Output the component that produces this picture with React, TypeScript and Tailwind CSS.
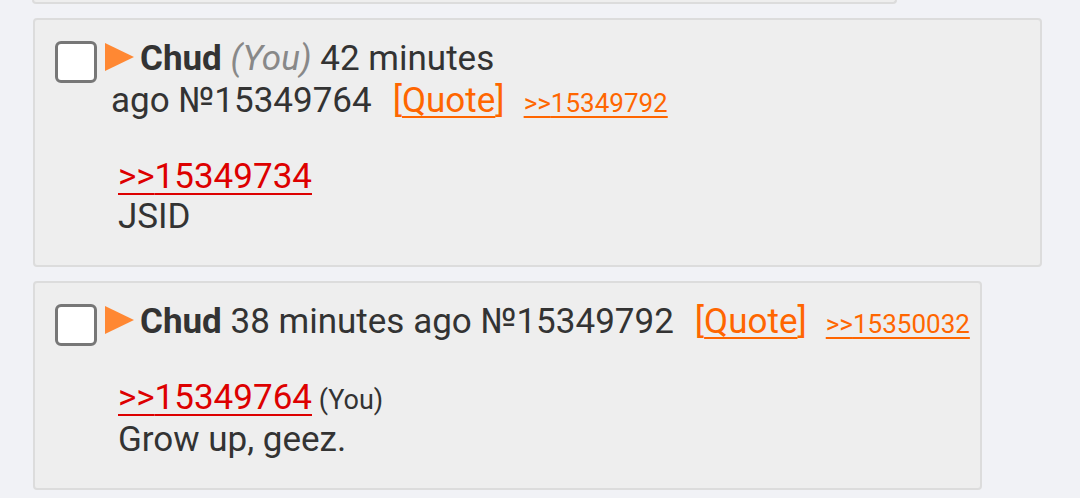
import React from "react";

type Post = {
  you?: boolean;
  time: string;
  no: string;
  replies: string[];
  quote: string;
  quoteYou?: boolean;
  text: string;
};

const posts: Post[] = [
  { you: true, time: "42 minutes", no: "15349764", replies: ["15349792"], quote: "15349734", text: "JSID" },
  { time: "38 minutes", no: "15349792", replies: ["15350032"], quote: "15349764", quoteYou: true, text: "Grow up, geez." },
];

function PostBox({ p }: { p: Post }) {
  return (
    <div className="w-fit max-w-full rounded-[4px] border-2 border-[#dcdcdc] bg-[#eeeeee] pb-[28px] pl-[20px] pr-[10px] pt-[18px]">
      <div className="text-[35px] leading-[42px] text-[#333333]">
        <span className="float-left mr-[14px] mt-[3px] block h-[42px] w-[42px] rounded-[6px] border-[3px] border-[#777777] bg-white" />
        <svg className="-ml-[6px] mr-[6px] inline-block align-[-1px]" width="29" height="28" viewBox="0 0 29 28">
          <polygon points="0,0 29,14 0,28" fill="#ff8833" />
        </svg>
        <b className="font-bold">Chud</b>{" "}
        {p.you && <i className="text-[#888888]">(You) </i>}
        {p.time}{" "}
        <span className="whitespace-nowrap">
          ago №{p.no}
          <span className="ml-[21px] mr-[19px] text-[#ff6600]">
            [<span className="underline decoration-2 underline-offset-4">Quote</span>]
          </span>
          {p.replies.map((r) => (
            <span key={r} className="text-[26px] text-[#ff6600] underline decoration-2 underline-offset-4">
              &gt;&gt;{r}
            </span>
          ))}
        </span>
      </div>
      <div className="ml-[63px] mt-[33px] text-[35px] leading-[40px] text-[#333333]">
        <div>
          <span className="text-[#dd0000] underline decoration-2 underline-offset-[5px]">&gt;&gt;{p.quote}</span>
          {p.quoteYou && <span className="text-[27px] text-[#333333]"> (You)</span>}
        </div>
        <div>{p.text}</div>
      </div>
    </div>
  );
}

export default function App() {
  return (
    <div className="min-h-[498px] bg-[#f1f2f6] pl-[33px] pr-[38px] font-['Roboto',sans-serif]">
      <div className="h-[4px] w-[865px] -translate-x-px rounded-b-[4px] border-2 border-t-0 border-[#dcdcdc] bg-[#eeeeee]" />
      <div className="flex flex-col items-start gap-[14px] pt-[14px]">
        {posts.map((p) => (
          <PostBox key={p.no} p={p} />
        ))}
      </div>
    </div>
  );
}
